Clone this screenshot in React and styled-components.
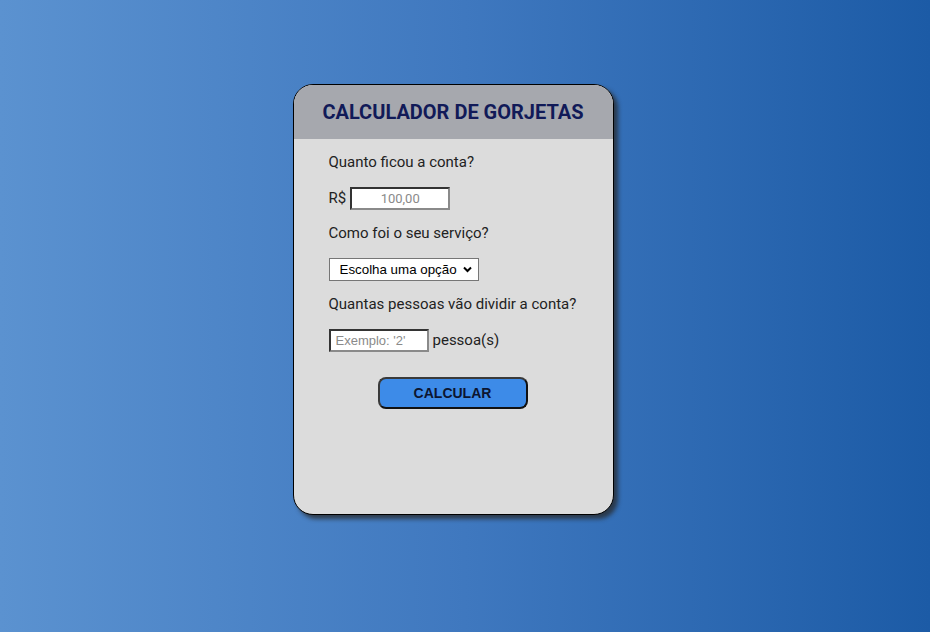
import React from "react";
import styled, { createGlobalStyle } from "styled-components";

const Global = createGlobalStyle`
  html, body { margin: 0; padding: 0; }
  body { font-family: Roboto, "Liberation Sans", Arial, sans-serif; }
`;

const Page = styled.div`
  width: 930px;
  height: 632px;
  box-sizing: border-box;
  background: linear-gradient(to right, #5b92d0 0%, #3f78bf 50%, #1c5ba6 100%);
  display: flex;
  justify-content: center;
  align-items: flex-start;
  padding: 84px 24px 0 0;
`;

const Card = styled.div`
  width: 321px;
  height: 431px;
  box-sizing: border-box;
  background: #dcdcdc;
  border: 1px solid #000;
  border-radius: 20px;
  box-shadow: 4px 4px 4px rgba(40, 40, 40, 0.75);
  overflow: hidden;
  display: flex;
  flex-direction: column;
`;

const Header = styled.div`
  height: 54px;
  background: #a6a8ae;
  display: flex;
  align-items: center;
  justify-content: center;
`;

const Title = styled.h1`
  margin: 0;
  font-family: Roboto, sans-serif;
  font-weight: 700;
  font-size: 20px;
  color: #111a58;
`;

const Body = styled.div`
  display: flex;
  flex-direction: column;
  align-items: flex-start;
  gap: 14.5px;
  padding: 14px 20px 0 35px;
`;

const Label = styled.p`
  margin: 0;
  font-size: 15px;
  line-height: 19px;
  color: #222;
  white-space: nowrap;
`;

const Row = styled.div`
  display: flex;
  align-items: center;
  gap: ${(p) => p.$gap || 4}px;
  font-size: 15px;
  color: #222;
`;

const TextInput = styled.input`
  width: 100px;
  height: 23px;
  box-sizing: border-box;
  padding: 1px 5px;
  border: 2px solid;
  border-color: #333 #8a8a8a #8a8a8a #333;
  background: #fff;
  font-family: ${(p) => (p.$center ? "Roboto" : '"Liberation Sans"')}, sans-serif;
  font-size: 13px;
  text-align: ${(p) => (p.$center ? "center" : "left")};
  outline: none;
  &::placeholder { color: #8a8a8a; }
`;

const SelectWrap = styled.div`
  position: relative;
  width: 150px;
  height: 23px;
`;

const Select = styled.select`
  appearance: none;
  width: 150px;
  height: 23px;
  box-sizing: border-box;
  border: 1px solid #767676;
  background: #fff;
  padding: 0 0 0 10px;
  font-family: "Liberation Sans", Arial, sans-serif;
  font-size: 13.33px;
  color: #000;
  outline: none;
`;

const Chevron = styled.svg`
  position: absolute;
  right: 7px;
  top: 8px;
  pointer-events: none;
`;

const ButtonRow = styled.div`
  align-self: stretch;
  display: flex;
  justify-content: center;
  padding-top: 11px;
  padding-right: 16px;
`;

const Button = styled.button`
  width: 150px;
  height: 32px;
  box-sizing: border-box;
  border: 2px solid;
  border-color: #3a3a3a #111 #111 #3a3a3a;
  border-radius: 8px;
  background: #3d8be8;
  font-family: "Liberation Sans", Arial, sans-serif;
  font-weight: 700;
  font-size: 14px;
  color: #0c1530;
  cursor: pointer;
`;

export default function App() {
  return (
    <>
      <Global />
      <Page>
        <Card>
          <Header>
            <Title>CALCULADOR DE GORJETAS</Title>
          </Header>
          <Body>
            <Label>Quanto ficou a conta?</Label>
            <Row $gap={4}>
              <span>R$</span>
              <TextInput $center placeholder="100,00" />
            </Row>
            <Label>Como foi o seu serviço?</Label>
            <SelectWrap>
              <Select defaultValue="">
                <option value="">Escolha uma opção</option>
                <option value="1">Ótimo</option>
                <option value="2">Bom</option>
                <option value="3">Ruim</option>
              </Select>
              <Chevron width="9" height="7" viewBox="0 0 9 7">
                <path d="M1 1.5 L4.5 5 L8 1.5" fill="none" stroke="#000" strokeWidth="2" />
              </Chevron>
            </SelectWrap>
            <Label>Quantas pessoas vão dividir a conta?</Label>
            <Row $gap={4}>
              <TextInput placeholder="Exemplo: '2'" />
              <span>pessoa(s)</span>
            </Row>
            <ButtonRow>
              <Button>CALCULAR</Button>
            </ButtonRow>
          </Body>
        </Card>
      </Page>
    </>
  );
}
